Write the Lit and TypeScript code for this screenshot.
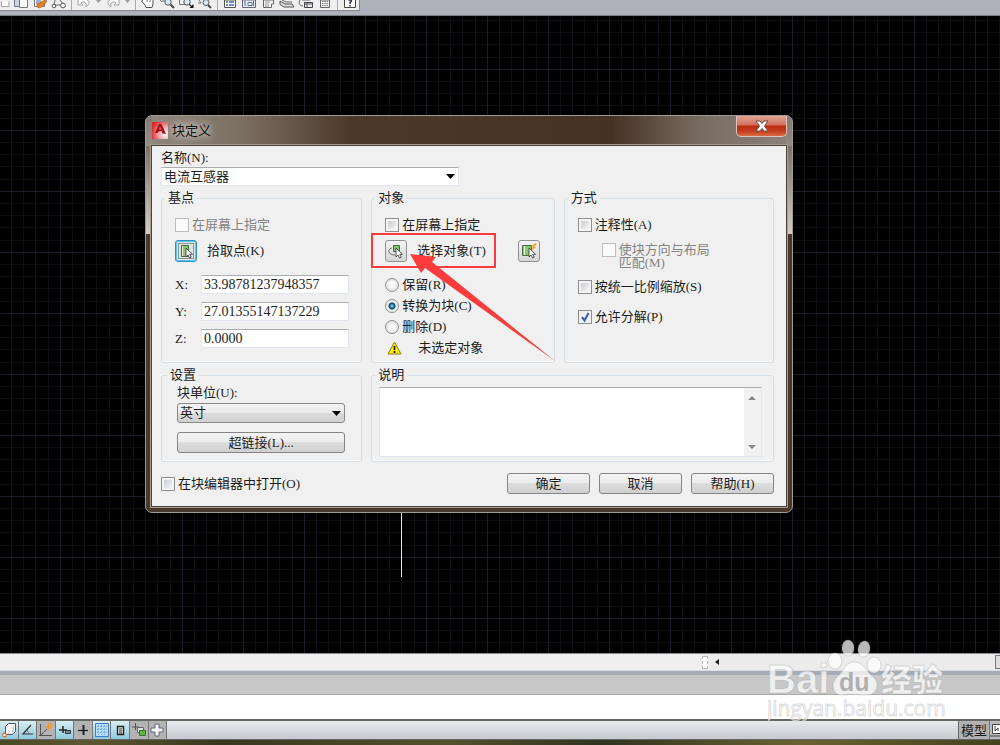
import { LitElement, html, svg, css } from "lit";
import { customElement, state } from "lit/decorators.js";

const cursor = svg`<path d="M9 6v9l2-2 1.6 3 1.6-.8-1.5-2.9h2.8z" fill="#fff" stroke="#444" stroke-width=".9"/>`;

const toolIcons: Record<string, unknown> = {
  open: svg`<path d="M2 0v7.500h11V0" fill="#fff" stroke="#777"/>`,
  copy: svg`<path d="M1.500 0v6.500h6V0" fill="#cdd3e2" stroke="#6f7788"/><path d="M6.500 0v7.500h8V0" fill="#fff" stroke="#6f7788"/>`,
  match: svg`<path d="M2.500 0v6.500h10V0" fill="#eef1f8" stroke="#6f7788"/><path d="M4 1h5M4 3h3" stroke="#4a6fb0"/><path d="M5 4l4-2 4-2 2 1-3 4-4 3-3-1z" fill="#e08020" stroke="#a85a10" stroke-width=".6"/>`,
  block: svg`<path d="M4 0L3 5M4 5h7M9 0l3 4" stroke="#666" fill="none"/><circle cx="3" cy="6" r="1.800" fill="#fff" stroke="#555"/><circle cx="12" cy="5.500" r="2.400" fill="#fff" stroke="#555"/>`,
  undo: svg`<path d="M2 0v5h5L5 3c3-2 6-1 5 4 4-3 4-6 1-7" fill="#fafafa" stroke="#a2a2a2"/>`,
  redo: svg`<path d="M14 0v5H9l2-2C8 1 5 2 6 7 2 4 2 1 5 0" fill="#fafafa" stroke="#a2a2a2"/>`,
  hand: svg`<path d="M3 0l-1.500 1 3.500 4 1 2.500h6L13 4V0" fill="#fff" stroke="#555"/><path d="M7 0v2M10 0v2" stroke="#777"/>`,
  zoom: svg`<path d="M1 0l2 2M3 1h3" stroke="#777"/><circle cx="9" cy="2" r="3.200" fill="#dbe7f2" stroke="#555"/><path d="M11.500 4.500L15 8" stroke="#444" stroke-width="2"/>`,
  window: svg`<path d="M1.500 0v4.500H7" fill="none" stroke="#777"/><circle cx="9" cy="2" r="3.200" fill="#dbe7f2" stroke="#555"/><path d="M11 4l3 3" stroke="#444" stroke-width="1.500"/><path d="M15.500 4v4h-4z" fill="#111"/>`,
  previous: svg`<path d="M2 0l2 3M1 3h3" stroke="#777"/><circle cx="9" cy="2.500" r="3" fill="#dbe7f2" stroke="#555"/><path d="M11 5l3 3" stroke="#444" stroke-width="2"/>`,
  props: svg`<path d="M2.500 0v7.500h11V0z" fill="#fff" stroke="#555"/><path d="M4 2h2M7 2h5M4 5h2M7 5h5" stroke="#376ab8" stroke-width="1.300"/>`,
  center: svg`<path d="M1.500 0v7.500h13V0z" fill="#e8edf5" stroke="#667"/><path d="M4 1v5M7 2.500h4v3H7zM12.500 1v5" stroke="#556f96" fill="#fff"/>`,
  palette: svg`<path d="M3.500 0v7.500h8V4h2V0z" fill="#f5f5f5" stroke="#666"/><path d="M5 2h5M5 4h4M5 6h4" stroke="#999"/>`,
  sheets: svg`<path d="M1 1l5 3h7l2 3H5L1 4.500z" fill="#ddd" stroke="#555"/><path d="M3 0l4 2h6" stroke="#666" fill="none"/>`,
  markup: svg`<path d="M6.500 2.500h8v5h-8z" fill="#e8edf5" stroke="#444"/><path d="M7 4h7M9 3v4" stroke="#555"/><path d="M2 0C0 3 2 6 5 6M4 0h8" fill="none" stroke="#667"/>`,
  calc: svg`<path d="M3.500 0v7.500h9V0z" fill="#f2f2f2" stroke="#666"/><path d="M5 1.500h6M5 3.500h6M5 5.500h6" stroke="#777" stroke-dasharray="1.500 .8"/>`,
  help: svg`<path d="M2.500 0v7.500h11V0" fill="#fff" stroke="#444"/><path d="M6.500 0.500Q9 -1 9.500 1 9 2 8 2.500v1.500M8 5v1.500" fill="none" stroke="#224" stroke-width="1.400"/>`,
};

const toolLayout = [
  "open", "copy", "match", "block", "|", "undo", "v", "redo", "v", "|",
  "hand", "zoom", "window", "previous", "|",
  "props", "center", "palette", "sheets", "markup", "calc", "|", "help",
];

const statusIcons: { name: string; on: boolean; icon: unknown }[] = [
  { name: "3DOSNAP", on: true, icon: svg`<path d="M4.500 4.500l3-3h7v8l-3 3h-7z" fill="#f4f6f8" stroke="#556"/><path d="M12 4.500V12" stroke="#aab"/><circle cx="3.500" cy="13" r="1.800" fill="#fff" stroke="#e06a30" stroke-width="1.200"/>` },
  { name: "OTRACK", on: true, icon: svg`<path d="M12 3L4 12h10" fill="none" stroke="#333" stroke-width="1.200"/><path d="M8 8l2 4" stroke="#777"/>` },
  { name: "DUCS", on: false, icon: svg`<path d="M2.500 2v12M1 13.500h13M3 13L9 7" fill="none" stroke="#555"/><path d="M11 1l-3 5h2l-1 4 5-6h-2l2-3z" fill="#f59a20"/>` },
  { name: "DYN", on: true, icon: svg`<path d="M3 8h8M7 4v7" stroke="#222" stroke-width="1.500"/><path d="M9.500 8.500h5v3h-5z" fill="#889" stroke="#333"/>` },
  { name: "LWT", on: false, icon: svg`<path d="M3 8.500h10" stroke="#222" stroke-width="1.300"/><path d="M8.500 3v10" stroke="#222" stroke-width="2"/>` },
  { name: "TPY", on: true, icon: svg`<path d="M1.500 1.500h13v13h-13z" fill="#b8dcf6" stroke="#3c7fc4"/><path d="M3 4.500h10M3 7.500h10M3 10.500h10M4.500 3v10M7.500 3v10M10.500 3v10" stroke="#74ade0" stroke-dasharray="2 1"/>` },
  { name: "QP", on: true, icon: svg`<path d="M5.500 4.500h6v8h-6z" fill="#e8e8e8" stroke="#222" stroke-width="1.400"/><path d="M7 7h3M7 9h3M7 11h3" stroke="#333"/>` },
  { name: "SC", on: false, icon: svg`<path d="M1 5h7M4.500 1v7" stroke="#555"/><path d="M6.500 5.500h6v5h-6z" fill="#ddd" stroke="#666"/><path d="M8.500 8.500h6v5h-6z" fill="#62b546" stroke="#2d7a22"/>` },
  { name: "AM", on: false, icon: svg`<path d="M6 2h4v4h4v4h-4v4H6v-4H2V6h4z" fill="#f2f3f7" stroke="#667"/>` },
];

@customElement("app-root")
export class AppRoot extends LitElement {
  @state() private mode = "convert";

  static styles = css`
    :host {
      display: flex;
      flex-direction: column;
      height: 100vh;
      overflow: hidden;
      position: relative;
      background: #000;
      color: #1c1c1c;
      font: 13px/16px "Liberation Serif", "Noto Sans CJK SC", serif;
    }
    * { box-sizing: border-box; }
    button, input, select, textarea { font: inherit; color: inherit; margin: 0; }
    button { padding: 0; }
    svg { display: block; }

    .toolstrip { flex: none; height: 16px; background: #aeb1ba; border-bottom: 1px solid #777d80; display: flex; align-items: flex-start; }
    .toolbar { display: flex; height: 11px; background: #efefef; border-right: 1px solid #888; border-bottom: 1px solid #85878b; overflow: hidden; }
    .tool { width: 19px; height: 9px; border: 0; background: none; display: flex; justify-content: center; }
    .tool.first { width: 11px; justify-content: flex-end; }
    .tool.drop { width: 10px; }
    .toolsep { width: 6px; display: flex; justify-content: center; }
    .toolsep::before { content: ""; width: 1px; background: #aaa; }

    .canvas { flex: 1; position: relative; min-height: 0; }
    .drawing { width: 100%; height: 100%; }

    .hscroll { flex: none; height: 18px; background: #efefef; border-top: 1px solid #8c8c8c; border-bottom: 1px solid #dcdcdc; display: flex; justify-content: flex-end; align-items: center; }
    .track { width: 298px; height: 100%; display: flex; align-items: center; background: #ececec; }
    .grip { width: 6px; height: 13px; border: 1px dashed #bbb; background: #fff; }
    .left { width: 18px; height: 14px; border: 0; background: none; display: grid; place-items: center; }
    .corner { width: 5px; height: 14px; margin-left: auto; border: 1px solid #777; border-right: 0; background: #ddd; }
    .band { flex: none; height: 24px; background: #c8c8c8; border-top: 4px solid #a6acb5; border-bottom: 1px solid #aaa; }
    .command { flex: none; height: 24px; border: 0; background: #fff; width: 100%; padding: 0 6px; }
    .status { flex: none; height: 21px; border-top: 2px solid #666864; border-bottom: 1px solid #666; background: linear-gradient(#e8eaed, #c6c9cf); display: flex; justify-content: space-between; }
    .toggles { display: flex; width: 167px; }
    .toggle { flex: 1; min-width: 0; border: 0; border-right: 1px solid #777; background: #b3b3b3; display: grid; place-items: center; overflow: hidden; }
    .toggle.on { background: linear-gradient(#d8eef3, #8ecbdc); }
    .views { display: flex; }
    .view { border: 0; border-left: 1px solid #666; background: #b2b2b2; width: 31px; padding-top: 2px; line-height: 16px; white-space: nowrap; }
    .layout { border: 0; border-left: 1px solid #777; background: #bbb; width: 11px; overflow: hidden; }
    .desktop { flex: none; height: 5px; background: linear-gradient(90deg, #4a4a24, #5c5730 9%, #38381f 22%, #55502c 45%, #2f3320 60%, #6a6231 80%, #45411e); }

    .dialog {
      position: absolute; left: 145px; top: 99px; width: 648px;
      border: 1px solid #a19a94; border-radius: 7px;
      padding: 0 5px 5px;
      background:
        linear-gradient(rgba(120,108,98,.5), #d3cdc8) left 0 / 6px 118px no-repeat,
        linear-gradient(rgba(120,108,98,.5), #d3cdc8) right 0 / 6px 118px no-repeat,
        linear-gradient(90deg, #92887f, #7b6e63 15%, #4a3829 32%, #443224 72%, #796d63 86%, #8c827b) 0 0 / 100% 30px no-repeat,
        #4a382a;
      background-origin: padding-box;
    }
    .titlebar { height: 29px; display: flex; align-items: flex-start; }
    .logo { margin: 6px 4px 0 1px; }
    .title {
      margin: 6px 0 0; font-size: 13px; font-weight: 400; line-height: 17px; color: #111;
      text-shadow: 0 0 6px #ddd8d4, 0 0 8px #ccc6c0, 0 0 12px #bbb4ad;
    }
    .close {
      margin-left: auto; width: 51px; height: 21px; border: 1px solid #d8c4be; border-top: 0; border-radius: 0 0 5px 5px;
      background: linear-gradient(#e2a596, #d2705c 45%, #bc2c12 50%, #c43c1c 75%, #db6a43);
      display: grid; place-items: center;
    }
    .form { position: relative; background: #f0f0f0; border: 1px solid #4a443e; box-shadow: 0 0 0 1px #a39b94; padding: 4px 12px 12px 9px; }
    .name { display: grid; width: 298px; gap: 1px; margin-bottom: 4px; }
    .pick-list { position: relative; display: grid; align-items: center; }
    .pick-list select { appearance: none; width: 100%; height: 19px; padding: 0 2px; border: 1px solid #e2e6ee; border-top-color: #abadb3; border-radius: 0; background: #fff; line-height: 16px; }
    .pick-list svg { position: absolute; right: 4px; pointer-events: none; }
    .pick-list.raised { margin-top: 2px; }
    .pick-list.raised select { height: 20px; border: 1px solid #8a8a8a; border-radius: 3px; background: linear-gradient(#f2f2f2, #ebebeb 49%, #dcdcdc 50%, #d0d0d0); }

    .groups { display: grid; grid-template-columns: 201fr 183fr 210fr; gap: 4px 9px; }
    fieldset { min-width: 0; margin: 0; border: 1px solid #d5dfe5; border-radius: 3px; box-shadow: inset 0 -1px #fafafa; }
    legend { padding: 0 3px; margin: 0 0 0 -10px; line-height: 16px; }
    .wide { grid-column: span 2; }
    .base { padding: 11px 12px 13px 13px; }
    .objects { padding: 11px 14px 6px 13px; }
    .method { padding: 11px 8px 8px 13px; }
    .settings { padding: 2px 16px 8px 15px; }
    .notes { padding: 4px 11px 4px 7px; }
    .notes legend { margin-left: -4px; }

    .check { display: flex; align-items: center; gap: 3px; height: 16px; white-space: nowrap; }
    .check.two { height: 26px; line-height: 13px; align-items: flex-start; margin-left: 24px; }
    .check.off { color: #838383; }
    input[type="checkbox"] { appearance: none; flex: none; width: 14px; height: 14px; border: 1px solid #8f8f8f; background: linear-gradient(135deg, #c8ccd2, #f6f6f6) content-box, #f4f4f4; padding: 2px; }
    input[type="checkbox"]:disabled { border-color: #bcbcbc; background: #fafafa; }
    input[type="checkbox"]:checked { background: url("data:image/svg+xml,%3Csvg xmlns='http://www.w3.org/2000/svg' width='12' height='12'%3E%3Cpath d='M3 6l2.500 3.500L9.500 2' fill='none' stroke='%233c5aa8' stroke-width='2'/%3E%3C/svg%3E") center no-repeat, #eef0f4; }
    input[type="radio"] { appearance: none; flex: none; width: 14px; height: 14px; border: 1px solid #8e8f8f; border-radius: 50%; background: radial-gradient(#f8f8f8 30%, #cfd2d6); }
    input[type="radio"]:checked { background: radial-gradient(circle at 50% 50%, #9adcf6 0, #1f6f9f 25%, #123a5c 38%, #f0f2f3 46%, #e4e8ea); }

    .row { display: flex; align-items: center; }
    .pick { margin-top: 7px; }
    .push { gap: 10px; }
    .icon-button { width: 22px; height: 22px; border: 1px solid #919191; border-radius: 3px; background: linear-gradient(#f3f3f3, #d6d6d6); display: grid; place-items: center; }
    .icon-button.focus { border-color: #2f8fc0; box-shadow: inset 0 0 0 1px #5cc8ee; background: #dce4e6; }
    .last { margin-left: auto; }
    .coords { display: grid; grid-template-columns: 26px 1fr; gap: 8px 0; margin-top: 13px; align-items: center; }
    .coords input { height: 19px; min-width: 0; width: 100%; border: 1px solid #e2e6ee; border-top-color: #abadb3; background: #fff; padding: 0 2px; font-size: 14px; line-height: 17px; }
    .choices { display: grid; gap: 5px; margin-top: 15px; }
    .choices .check { gap: 3px; }
    .warning { display: flex; align-items: center; gap: 16px; height: 16px; padding-left: 2px; }
    .gap-10 { margin-top: 10px; }
    .gap-14 { margin-top: 14px; }
    .button { height: 21px; border: 1px solid #858585; border-radius: 3px; background: linear-gradient(#f4f4f4, #ececec 49%, #dddddd 50%, #d0d0d0); line-height: 18px; text-align: center; }
    .settings .button { width: 100%; margin-top: 9px; }
    .memo { display: flex; height: 70px; border: 1px solid #e2e6ee; border-top-color: #abadb3; background: #fff; }
    .memo textarea { flex: 1; border: 0; resize: none; background: #fff; outline: 0; padding: 2px; overflow: hidden; }
    .memo-scroll { width: 17px; background: #f1f1f1; display: flex; flex-direction: column; justify-content: space-between; }
    .memo-scroll button { height: 19px; border: 0; background: none; display: grid; place-items: center; }
    .footer { display: flex; align-items: center; gap: 9px; margin-top: 11px; }
    .footer .button { width: 83px; }
    .footer .check { margin-right: auto; }
    .callout { position: absolute; left: 0; top: 0; width: 100%; height: 100%; pointer-events: none; }

    .watermark { position: absolute; right: 48px; bottom: 18px; pointer-events: none; }
    .brand { font: 700 40px "Liberation Sans", sans-serif; }
    .brand-du { font: 700 25px "Liberation Sans", sans-serif; }
    .brand-cn { font: 900 31px "Noto Sans CJK SC", sans-serif; }
    .brand-url { font: 400 21px "Open Sans", sans-serif; }
  `;

  private tool(name: string, index: number) {
    if (name === "|") return html`<span class="toolsep"></span>`;
    if (name === "v")
      return html`<button class="tool drop" aria-label="list"><svg width="5" height="4"><path d="M0 0h5L2.500 3z" fill="#999" /></svg></button>`;
    return html`<button class="tool ${index === 0 ? "first" : ""}" aria-label=${name}>
      <svg width="16" height="9" viewBox="0 0 16 9" fill="none">${toolIcons[name]}</svg>
    </button>`;
  }

  private radio(value: string, label: string) {
    return html`<label class="check"
      ><input type="radio" name="mode" .checked=${this.mode === value} @change=${() => (this.mode = value)} />${label}</label
    >`;
  }

  private arrow() {
    return html`<svg width="9" height="5"><path d="M0 0h9L4.500 5z" fill="#000" /></svg>`;
  }

  private dialog() {
    return html`<section class="dialog" role="dialog" aria-labelledby="title">
      <header class="titlebar">
        <svg class="logo" width="16" height="17" viewBox="0 0 16 17">
          <defs><radialGradient id="red" cx=".85" cy=".7" r=".9"><stop offset="0" stop-color="#fff" /><stop offset=".5" stop-color="#f0a0a0" /><stop offset="1" stop-color="#dc2a30" /></radialGradient></defs>
          <rect width="16" height="17" fill="url(#red)" />
          <path d="M3 11L7 2h2.500L14 12l-3.500-.5L9.500 9 6.500 9.500 5.500 11z" fill="#a81018" />
          <path d="M7 7.500L8 4.500l1.500 3z" fill="#e86060" />
        </svg>
        <h1 class="title" id="title">块定义</h1>
        <button class="close" aria-label="关闭">
          <svg width="14" height="12" viewBox="0 0 14 12"><path d="M1 1h4l2 2.500L9 1h4L9.500 6l3.500 5H9L7 8.500 5 11H1l3.500-5z" fill="#fff" stroke="#6b4a48" /></svg>
        </button>
      </header>
      <form class="form" @submit=${(e: Event) => e.preventDefault()}>
        <div class="name">
          <label for="name">名称(N):</label>
          <span class="pick-list"><select id="name"><option>电流互感器</option></select>${this.arrow()}</span>
        </div>
        <div class="groups">
          <fieldset class="base">
            <legend>基点</legend>
            <label class="check off"><input type="checkbox" disabled />在屏幕上指定</label>
            <div class="row pick push">
              <button type="button" class="icon-button focus" id="pick">
                <svg width="18" height="18" viewBox="0 0 18 18"><path d="M1.500 1.500h15v15h-15z" fill="none" stroke="#444" stroke-dasharray="1 1" /><path d="M4.500 3.500h7v11h-7z" fill="#8cc474" stroke="#3d7038" /><path d="M5.500 4v10" stroke="#e8f5e0" />${cursor}</svg>
              </button>
              <label for="pick">拾取点(K)</label>
            </div>
            <div class="coords">
              <label for="x">X:</label><input id="x" value="33.98781237948357" />
              <label for="y">Y:</label><input id="y" value="27.01355147137229" />
              <label for="z">Z:</label><input id="z" value="0.0000" />
            </div>
          </fieldset>
          <fieldset class="objects">
            <legend>对象</legend>
            <label class="check"><input type="checkbox" />在屏幕上指定</label>
            <div class="row pick push">
              <button type="button" class="icon-button" id="select">
                <svg width="18" height="18" viewBox="0 0 18 18"><path d="M5 6C0 7 1 13 8 13" fill="none" stroke="#666" /><path d="M6.500 3.500h6v6h-6z" fill="#8cc474" stroke="#3d7038" />${cursor}</svg>
              </button>
              <label for="select">选择对象(T)</label>
              <button type="button" class="icon-button last" aria-label="快速选择">
                <svg width="18" height="18" viewBox="0 0 18 18"><path d="M2.500 3.500h9v10h-9z" fill="#8cc474" stroke="#3d7038" /><path d="M4.500 4v9" stroke="#e8f5e0" />${cursor}<path d="M15 1l-4 4h2l-2 4 5-4h-2l3-3z" fill="#f8a51c" /></svg>
              </button>
            </div>
            <div class="choices">
              ${this.radio("retain", "保留(R)")}${this.radio("convert", "转换为块(C)")}${this.radio("delete", "删除(D)")}
              <div class="warning">
                <svg width="15" height="14" viewBox="0 0 15 14"><path d="M7.500 1L14 13H1z" fill="#ffec10" stroke="#8a7f10" stroke-linejoin="round" /><path d="M7.500 5v4M7.500 10v2" stroke="#111" stroke-width="1.700" /></svg>
                <span>未选定对象</span>
              </div>
            </div>
          </fieldset>
          <fieldset class="method">
            <legend>方式</legend>
            <label class="check"><input type="checkbox" />注释性(A)</label>
            <label class="check two off gap-10"><input type="checkbox" disabled /><span>使块方向与布局<br />匹配(M)</span></label>
            <label class="check gap-10"><input type="checkbox" />按统一比例缩放(S)</label>
            <label class="check gap-14"><input type="checkbox" checked />允许分解(P)</label>
          </fieldset>
          <fieldset class="settings">
            <legend>设置</legend>
            <label for="unit">块单位(U):</label>
            <span class="pick-list raised"><select id="unit"><option>英寸</option></select>${this.arrow()}</span>
            <button type="button" class="button">超链接(L)...</button>
          </fieldset>
          <fieldset class="notes wide">
            <legend>说明</legend>
            <div class="memo">
              <textarea aria-label="说明"></textarea>
              <div class="memo-scroll">
                <button type="button" aria-label="上"><svg width="8" height="4"><path d="M0 4h8L4 0z" fill="#868686" /></svg></button>
                <button type="button" aria-label="下"><svg width="8" height="4"><path d="M0 0h8L4 4z" fill="#868686" /></svg></button>
              </div>
            </div>
          </fieldset>
        </div>
        <footer class="footer">
          <label class="check"><input type="checkbox" />在块编辑器中打开(O)</label>
          <button class="button">确定</button>
          <button type="button" class="button">取消</button>
          <button type="button" class="button">帮助(H)</button>
        </footer>
        <svg class="callout" aria-hidden="true">
          <rect x="220" y="88" width="123" height="33" fill="none" stroke="#fb3c3c" stroke-width="2" />
          <path d="M258 108l26 3-4 5 123 99-130-93-4 5z" fill="#fb3c3c" />
        </svg>
      </form>
    </section>`;
  }

  private watermark() {
    return html`<svg class="watermark" width="184" height="90" viewBox="0 0 184 90">
      <g fill="#fff" fill-opacity=".72" stroke="#999" stroke-opacity=".35" stroke-width="1">
        <text class="brand" x="-1" y="56">Bai</text>
        <ellipse cx="67" cy="24" rx="7" ry="8" />
        <ellipse cx="80" cy="11" rx="6" ry="8" />
        <ellipse cx="96" cy="12" rx="6" ry="8" transform="rotate(10 96 12)" />
        <ellipse cx="106" cy="28" rx="7" ry="8" />
        <path d="M86 25c8 0 11 6 16 12 5 4 8 8 7 13-1 5-5 8-10 8-8 0-17-1-25 0-6 0-9-4-9-9s3-8 7-12c4-5 6-12 14-12z" />
        <text class="brand-cn" x="113" y="54">经验</text>
        <text class="brand-url" x="-1" y="79">jingyan.baidu.com</text>
      </g>
      <text class="brand-du" x="71" y="54" fill="#b0b0b0">du</text>
    </svg>`;
  }

  render() {
    return html`
      <nav class="toolstrip"><div class="toolbar">${toolLayout.map((n, i) => this.tool(n, i))}</div></nav>
      <main class="canvas">
        <svg class="drawing" shape-rendering="crispEdges">
          <defs>
            <pattern id="grid" width="61" height="61" patternUnits="userSpaceOnUse" x="-1" y="-8">
              <path d="M12.500 0v61M24.500 0v61M36.500 0v61M49.500 0v61M0 12.500h61M0 24.500h61M0 36.500h61M0 49.500h61" stroke="#0f0f13" />
              <path d="M.500 0v61M0 .500h61" stroke="#1c1c28" />
            </pattern>
          </defs>
          <rect width="100%" height="100%" fill="url(#grid)" />
          <path d="M401.500 470v91" stroke="#e8e8e8" />
        </svg>
        ${this.dialog()}
      </main>
      <div class="hscroll">
        <div class="track">
          <span class="grip"></span>
          <button class="left" aria-label="左"><svg width="4" height="6"><path d="M4 0v6L0 3z" fill="#222" /></svg></button>
          <span class="corner"></span>
        </div>
      </div>
      <div class="band"></div>
      <input class="command" aria-label="命令" />
      <footer class="status">
        <div class="toggles">
          ${statusIcons.map((s) => html`<button class="toggle ${s.on ? "on" : ""}" aria-label=${s.name}><svg width="16" height="16" viewBox="0 0 16 16" fill="none">${s.icon}</svg></button>`)}
        </div>
        <div class="views">
          <button class="view">模型</button>
          <button class="layout" aria-label="布局"><svg width="16" height="16" viewBox="0 0 16 16"><path d="M2.500 2.500h12v9h-12z" fill="#fff" stroke="#444" /><path d="M5 4v5M5 9l3-3v3M0 14h12" fill="none" stroke="#444" /></svg></button>
        </div>
      </footer>
      <div class="desktop"></div>
      ${this.watermark()}
    `;
  }
}
